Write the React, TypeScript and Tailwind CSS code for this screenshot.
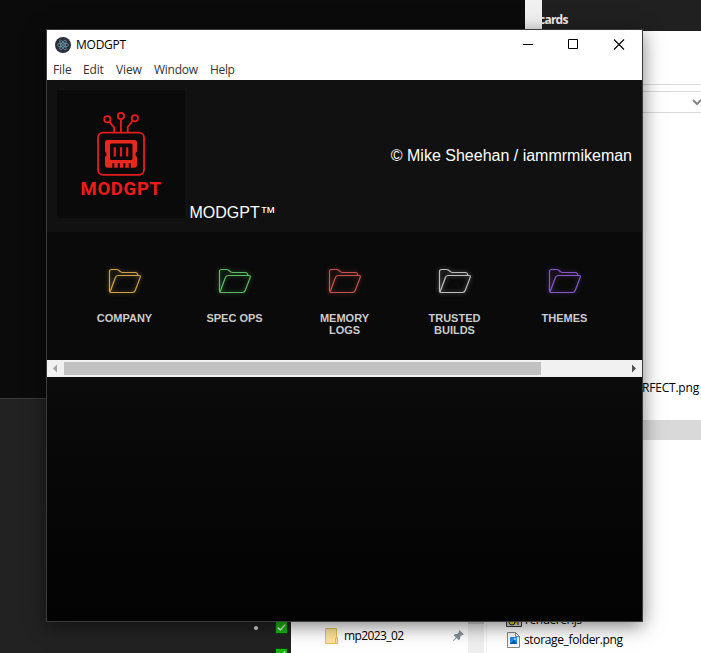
import React from "react";

const ui = "font-['Open_Sans','Noto_Sans',sans-serif] whitespace-pre text-[12px] leading-4";

const folders = [
  { label: "COMPANY", color: "#cda04a" },
  { label: "SPEC OPS", color: "#5cba62" },
  { label: "MEMORY LOGS", color: "#c65353" },
  { label: "TRUSTED BUILDS", color: "#bdbdbd" },
  { label: "THEMES", color: "#8658c8" },
];

function FolderIcon({ color }: { color: string }) {
  return (
    <svg width="48" height="40" viewBox="0 0 48 40" fill="none" stroke={color} strokeWidth="1.2" strokeLinejoin="round" style={{ filter: `drop-shadow(0 0 2px ${color}99)` }}>
      <path d="M8.5 31V11.500q0-2 2-2h5q1.500 0 2.500 1l1.500 1.200q.8.800 2 .8h13q2 0 2.400 3" />
      <path d="M9 32L14.300 17.700q.7-2.200 2.700-2.200H38q1.800 0 1.300 1.600L34.300 30.300q-.8 2.200-2.700 2.200H9.800q-1.300 0-1.300-1.800" />
    </svg>
  );
}

function Logo() {
  return (
    <svg className="shrink-0 bg-[#0a0a0a]" width="128" height="128" viewBox="57 90 128 128" fill="none" stroke="#e81c1c" strokeWidth="1.800">
      <circle cx="107.300" cy="119.300" r="3.100" />
      <circle cx="120.900" cy="116" r="3.100" />
      <circle cx="134.900" cy="118.200" r="3.100" />
      <path d="M109.300 121.800l4.800 5.500v5M120.900 119.200v13M132.700 120.800l-5 6.200v5.200" />
      <rect x="98" y="132.600" width="46" height="42.200" rx="5" />
      <path fill="#e8281e" stroke="none" fillRule="evenodd" d="M107.500 140h27q2.500 0 2.500 2.500v9q-1.500 1-1.500 2.800t1.500 2.800v7.600q0 3-3 3h-3.200v-4.500h-2v4.500h-3.500v-4.500h-2v4.500h-3.500v-4.500h-2v4.500h-3.500v-4.500h-2v4.500h-4.300q-3 0-3-3v-7.600q1.500-1 1.500-2.800t-1.500-2.800v-9q0-2.500 2.500-2.500ZM111.500 143.500q-1.500 0-1.500 1.500v13.500q0 1.500 1.500 1.500h19.500q1.500 0 1.500-1.500v-13.500q0-1.500-1.500-1.500Z" />
      <path strokeWidth="2.200" d="M114.800 147.300v9.200M121 147.300v9.200M127.200 147.300v9.200" />
      <text x="80.500" y="195.200" textLength="80.500" lengthAdjust="spacing" fill="#ee1b1b" stroke="none" className="font-['Roboto',sans-serif] text-[18.500px] font-bold">MODGPT</text>
    </svg>
  );
}

function CheckBox() {
  return (
    <svg width="13" height="13" viewBox="0 0 13 13" className="block shrink-0">
      <path fill="#16b80c" stroke="#073f05" d="M.5.5h12v12H.5z" />
      <path fill="none" stroke="#e6fbe3" strokeWidth="1.400" d="M2.700 6.600l2.500 2.500 5-5.500" />
    </svg>
  );
}

function Backdrop() {
  return (
    <div className="flex h-full">
      <div className="flex w-[291px] shrink-0 flex-col bg-[#222]">
        <div className="h-[399px] shrink-0 border-b border-[#3b3b3b] bg-[#0b0b0b]" />
        <div className="flex items-start justify-end gap-[17px] pr-[3px] pt-[222px]">
          <span className="mt-[5px] size-[4px] rounded-full bg-[#ddd]" />
          <div className="flex flex-col gap-[14px]">
            <CheckBox />
            <CheckBox />
          </div>
        </div>
      </div>
      <div className="flex min-w-0 flex-1 flex-col bg-white">
        <div className="flex h-[31px] shrink-0">
          <div className="w-[234px] bg-[#0b0b0b]" />
          <div className="w-[17px] bg-[#f0f0f0]" />
          <div className="flex flex-1 overflow-hidden bg-[#202020] pt-[12px]">
            <span className={`${ui} -ml-[3px] font-bold tracking-[-0.75px] text-[#eee]`}>cards</span>
          </div>
        </div>
        <div className="flex h-[590px] justify-end">
          <div className="w-[60px] pt-[53px]">
            <div className="h-[8px] border-y border-[#d9d9d9]" />
            <div className="flex h-[21px] items-center justify-end overflow-hidden border-b border-[#d9d9d9]">
              <svg width="9" height="8" viewBox="0 0 9 8" className="block shrink-0" fill="none" stroke="#858585" strokeWidth="2"><path d="M1 2l4 4 4-4" /></svg>
            </div>
            <div className={`${ui} mt-[267px] flex justify-end pr-[2px] tracking-[-0.2px] text-black`}>RFECT.png</div>
            <div className="mt-[24px] h-[20px] bg-[#d9d9d9]" />
          </div>
        </div>
        <div className="flex h-[32px] overflow-hidden">
          <div className="flex w-[177px] items-start pl-[33px] pt-[6px]">
            <svg width="15" height="17" viewBox="0 0 15 17" className="mt-px block"><path fill="#ffe59b" stroke="#e9bf50" d="M1.500.5h11v9h1v6h-12z" /><path fill="none" stroke="#e9bf50" d="M11.500 15v-5h2" /></svg>
            <span className={`${ui} ml-[5px] mt-px w-[109px] tracking-[-0.6px] text-black`}>mp2023_02</span>
            <svg width="11" height="11" viewBox="0 0 11 11" className="mt-[3px] block shrink-0" fill="#85929d"><path d="M6.500 0L11 4.500l-1.200.6-.8-.2-2 2.200.1 2-1.300 1.200-2.200-2.200L.6 11 0 10.400l2.800-3L.700 5.200 2 4l2 .1L6.200 2 6 .9z" /></svg>
          </div>
          <div className="w-[16px] bg-[#efefef]"><div className="h-[3px] bg-[#cdcdcd]" /></div>
          <div className="ml-[2px] flex-1 border-l border-[#f1f1f1] pl-[20px]">
            <div className="flex h-[6px] items-end">
              <svg width="16" height="16" viewBox="0 0 16 16" className="-ml-px block shrink-0"><path fill="#ddd" stroke="#333" d="M.5.5h15v15H.5z" /><circle cx="6" cy="11" r="3" fill="#eed92e" stroke="#222" /><path d="M8 13l4-6v7" stroke="#222" fill="#eed92e" /></svg>
              <span className={`${ui} ml-[3px] -mb-px tracking-[-0.45px] text-black`}>renderer.js</span>
            </div>
            <div className="mt-[4px] flex">
              <svg width="13" height="16" viewBox="0 0 13 16" className="mt-px block shrink-0"><path fill="#fafafa" stroke="#848484" d="M.5.5h8l4 4v11H.5zM8.500.5v4h4" /><path fill="#268be2" d="M3 5h7v7H3z" /><path fill="#0755a2" d="M3 12l4-4 3 4z" /><circle cx="8" cy="7" r="1" fill="#b9edff" /></svg>
              <span className={`${ui} ml-[4px] mt-px tracking-[-0.35px] text-black`}>storage_folder.png</span>
            </div>
          </div>
        </div>
      </div>
    </div>
  );
}

function TitleBar() {
  return (
    <div className="flex h-[29px] items-center pl-[8px]">
      <svg width="16" height="16" viewBox="0 0 16 16" className="block">
        <circle cx="8" cy="8" r="8" fill="#2b2e3b" />
        <g fill="none" stroke="#9feaf9" strokeWidth=".55" opacity=".75">
          <ellipse cx="8" cy="8" rx="5.500" ry="2" />
          <ellipse cx="8" cy="8" rx="5.500" ry="2" transform="rotate(60 8 8)" />
          <ellipse cx="8" cy="8" rx="5.500" ry="2" transform="rotate(120 8 8)" />
        </g>
        <circle cx="8" cy="8" r=".7" fill="#9feaf9" />
      </svg>
      <span className={`${ui} ml-[5px] tracking-[-0.25px] text-black`}>MODGPT</span>
      <svg className="ml-auto mr-[17px] block" width="102" height="12" viewBox="0 0 102 12" fill="none" stroke="#000">
        <path d="M0 5.500h10M45.500.5h9v9h-9z" />
        <path d="M91 .5l10 10M101 .5L91 10.500" strokeWidth="1.100" />
      </svg>
    </div>
  );
}

export default function App() {
  return (
    <div className="relative h-[653px] w-[701px] overflow-hidden">
      <Backdrop />
      <div className="absolute left-[46px] top-[29px] flex h-[593px] w-[597px] flex-col border border-[#3c3c3c] bg-white shadow-[0_4px_18px_rgba(0,0,0,0.5)]">
        <TitleBar />
        <div className={`${ui} flex h-[21px] items-start pl-[6px] pt-[3px] text-[#333]`}>
          <span className="w-[30px] tracking-[-0.1px]">File</span>
          <span className="w-[33px] tracking-[-0.15px]">Edit</span>
          <span className="w-[38px] tracking-[-0.15px]">View</span>
          <span className="w-[56px] tracking-[-0.25px]">Window</span>
          <span className="tracking-[-0.35px]">Help</span>
        </div>
        <header className="flex h-[152px] shrink-0 items-center justify-between bg-[#111] px-[10px] font-['Liberation_Sans',Arial,sans-serif] text-[16px] leading-[18px] text-white">
          <div className="-mt-[4px] flex items-end">
            <Logo />
            <span className="-mb-[4px] ml-[4.500px]">MODGPT™</span>
          </div>
          <span>© Mike Sheehan / iammrmikeman</span>
        </header>
        <div className="flex h-[128px] shrink-0 bg-[#0a0a0a] pl-[22.500px] pt-[28px] font-['Liberation_Sans',Arial,sans-serif]">
          {folders.map((f) => (
            <div key={f.label} className="flex w-[110px] flex-col items-center text-center text-[11px] font-bold leading-[12px] text-[#ccc]">
              <FolderIcon color={f.color} />
              <span className="mt-[12px] w-[66px]">{f.label}</span>
            </div>
          ))}
        </div>
        <div className="flex h-[17px] shrink-0 items-center bg-[#f1f1f1]">
          <svg width="17" height="17" className="block" fill="#a3a3a3"><path d="M6 8.500l4-4v8z" /></svg>
          <div className="h-[13px] w-[477px] bg-[#c1c1c1]" />
          <svg width="17" height="17" className="ml-auto block" fill="#505050"><path d="M11 8.500l-4-4v8z" /></svg>
        </div>
        <div className="flex-1 bg-linear-to-b from-[#0b0b0b] to-[#030303]" />
      </div>
    </div>
  );
}
